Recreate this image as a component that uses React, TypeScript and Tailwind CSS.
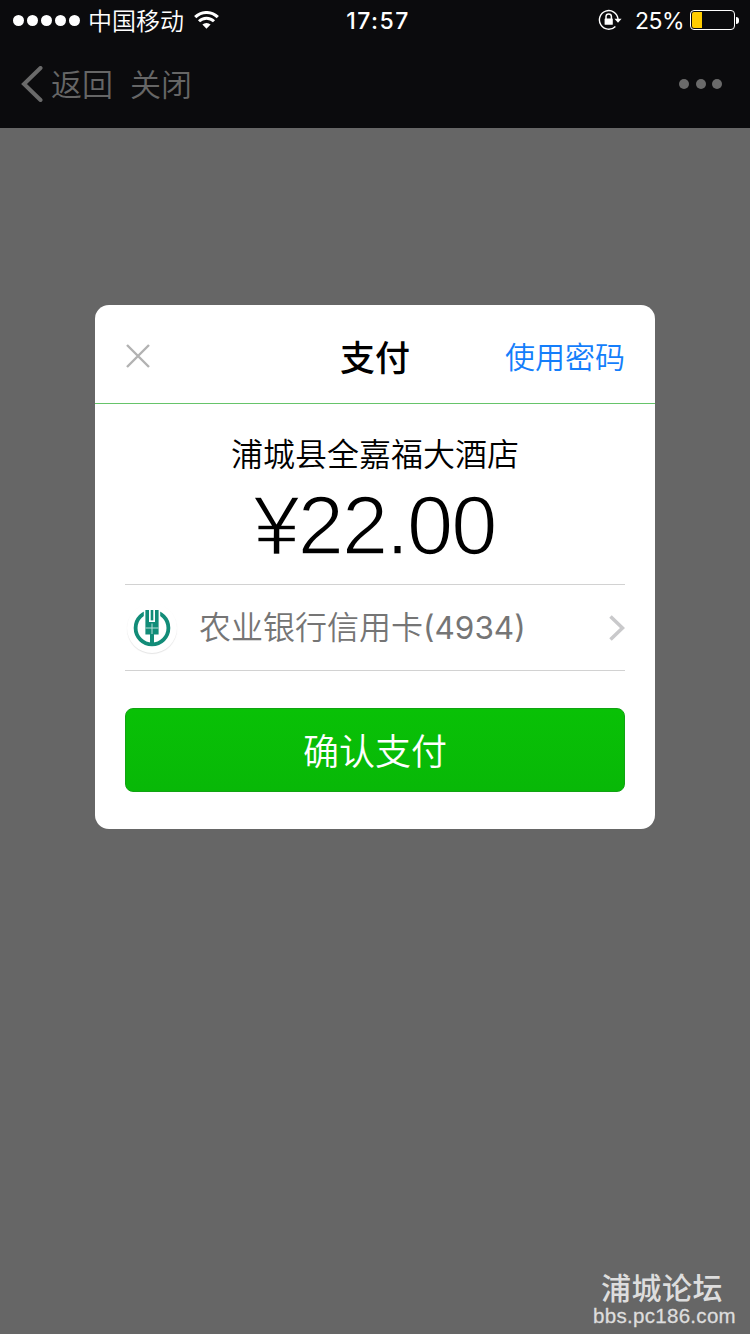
type iconProps = {
  className?: string;
};

const WifiIcon = ({ className }: iconProps) => (
  <svg className={className} viewBox="0 0 25 18" fill="none" stroke="#fff">
    <path d="M1.2 6.2a16 16 0 0 1 22.6 0" strokeWidth="3.1" />
    <path d="M5 10.3a10.6 10.6 0 0 1 15 0" strokeWidth="2.9" />
    <path d="M12.5 17.8L8.4 13.6a5.8 5.8 0 0 1 8.2 0z" fill="#fff" stroke="none" />
  </svg>
);

const LockIcon = ({ className }: iconProps) => (
  <svg className={className} viewBox="0 0 24 22" fill="none" stroke="#fff">
    <path d="M17.4 17.4A9.3 9.3 0 1 1 20 10" strokeWidth="1.4" />
    <path d="M16.4 9.8h7.2l-3.6 4z" fill="#fff" stroke="none" />
    <path d="M8 10V7.6a2.7 2.7 0 0 1 5.4 0V10" strokeWidth="1.5" />
    <rect x="6.6" y="9.4" width="8.2" height="6.4" rx="0.6" fill="#fff" stroke="none" />
  </svg>
);

const BankLogo = ({ className }: iconProps) => (
  <svg className={className} viewBox="0 0 38 38">
    <circle cx="19" cy="19" r="16.4" fill="none" stroke="#128c78" strokeWidth="3.8" />
    <path d="M10.8 0h16.4v9H10.8z" fill="#fff" />
    <path d="M12.4 1H16v12h6V1h3.6v24.5H21V36h-4V25.5h-4.6z" fill="#128c78" />
    <path d="M17.7 1h2.6v10.4h-2.6z" fill="#128c78" />
    <path d="M19 14.5v10.5M12.5 19h13" stroke="#b9e0d8" strokeWidth="1" />
  </svg>
);

const StatusBar = () => {
  return (
    <div className="grid h-10 grid-cols-3 items-center text-white">
      <div className="flex items-center pl-[13px]">
        <div className="flex gap-[3px]">
          {[1, 2, 3, 4, 5].map((i) => (
            <div key={i} className="size-[11px] rounded-full bg-white" />
          ))}
        </div>
        <div className="ml-[8px] pt-[3px] text-[24px] leading-[37px] font-[350] whitespace-nowrap">
          中国移动
        </div>
        <WifiIcon className="ml-[10px] h-[18px] w-[25px]" />
      </div>
      <div className="pt-[2px] pl-[6px] text-center text-[23px] leading-[38px] font-medium tracking-[1.5px]">
        17:57
      </div>
      <div className="flex items-center justify-end pr-[11px]">
        <LockIcon className="h-[22px] w-6" />
        <div className="ml-[13px] pt-[2px] text-[23px] leading-[38px] tracking-[-0.5px]">25%</div>
        <div className="ml-[6px] h-5 w-[45px] rounded-[4px] border border-white p-px">
          <div className="h-full w-[10px] rounded-l-[2px] bg-[#ffcc00]" />
        </div>
        <div className="ml-px h-[7px] w-[3px] rounded-r-full bg-white" />
      </div>
    </div>
  );
};

const NavBar = () => {
  return (
    <div className="flex h-[88px] items-center pr-7 pl-[21px] text-[31px] font-[350] text-[#666666]">
      <svg className="h-9 w-[22px]" viewBox="0 0 22 36" fill="none" stroke="#6a6a6a">
        <path d="M19.5 2L3 18l16.5 16" strokeWidth="4" strokeLinecap="round" />
      </svg>
      <div className="ml-2 pt-[3px]">返回</div>
      <div className="ml-[17px] pt-[3px]">关闭</div>
      <div className="ml-auto flex gap-[6.5px]">
        <div className="size-[10px] rounded-full bg-[#6a6a6a]" />
        <div className="size-[10px] rounded-full bg-[#6a6a6a]" />
        <div className="size-[10px] rounded-full bg-[#6a6a6a]" />
      </div>
    </div>
  );
};

const PayDialog = () => {
  return (
    <div className="mx-auto mt-[177px] h-[524px] w-[560px] rounded-[14px] bg-white">
      <div className="grid h-[99px] grid-cols-3 items-center border-b border-[#66c46a] px-[30px] pt-1">
        <svg className="size-[26px]" viewBox="0 0 26 26" stroke="#b2b2b2">
          <path d="M2 2l22 22M24 2L2 24" strokeWidth="2.4" />
        </svg>
        <div className="pt-[4px] text-center text-[35px] leading-[50px] font-medium text-black">
          支付
        </div>
        <div className="pt-[2px] text-right text-[30px] leading-[50px] font-[350] whitespace-nowrap text-[#147efb]">
          使用密码
        </div>
      </div>
      <div className="px-[30px]">
        <div className="flex h-[181px] flex-col items-center border-b border-[#d2d2d2] pt-[26px] text-black">
          <div className="text-[32px] leading-[50px] font-[350]">浦城县全嘉福大酒店</div>
          <div className="mt-[5px] mr-px font-['Liberation_Sans'] text-[83px] leading-[82px] tracking-[-2px] [-webkit-text-stroke:1.7px_#fff]">
            ¥22.00
          </div>
        </div>
        <div className="flex h-[86px] items-center border-b border-[#d2d2d2] text-[#757575]">
          <div className="ml-[2px] flex size-[50px] items-center justify-center rounded-full bg-white shadow-[0_1px_1px_#e4e4e4]">
            <BankLogo className="size-[38px]" />
          </div>
          <div className="ml-[22px] pt-px text-[32px] font-[350] whitespace-nowrap">
            农业银行信用卡<span className="text-[31.5px] font-normal">(4934)</span>
          </div>
          <svg className="ml-auto h-[26px] w-4" viewBox="0 0 16 26" fill="none" stroke="#c9c9cb">
            <path d="M1.5 1.5L13.5 13L1.5 24.5" strokeWidth="3.6" />
          </svg>
        </div>
        <button className="mt-[37px] block h-[84px] w-full rounded-[8px] border border-[#12a314] bg-linear-to-b from-[#09c106] to-[#08b807] pt-[4px] text-[36px] leading-[78px] font-[350] text-white">
          确认支付
        </button>
      </div>
    </div>
  );
};

const App = () => {
  return (
    <div className="relative h-[1334px] w-[750px] overflow-hidden bg-[#666666] font-[Inter,'Noto_Sans_CJK_SC',sans-serif]">
      <div className="h-32 bg-[#0b0b0d]">
        <StatusBar />
        <NavBar />
      </div>
      <PayDialog />
      <div className="absolute right-[14px] bottom-[6px] text-right font-['Liberation_Sans','Noto_Sans_CJK_SC',sans-serif] text-[#dddddd]">
        <div className="pr-[13px] text-[30px] leading-[31px] font-[450] tracking-[0.5px]">
          浦城论坛
        </div>
        <div className="text-[20.5px] leading-6 tracking-[0.3px] [-webkit-text-stroke:0.3px_#ddd]">
          bbs.pc186.com
        </div>
      </div>
    </div>
  );
};

export default App;
